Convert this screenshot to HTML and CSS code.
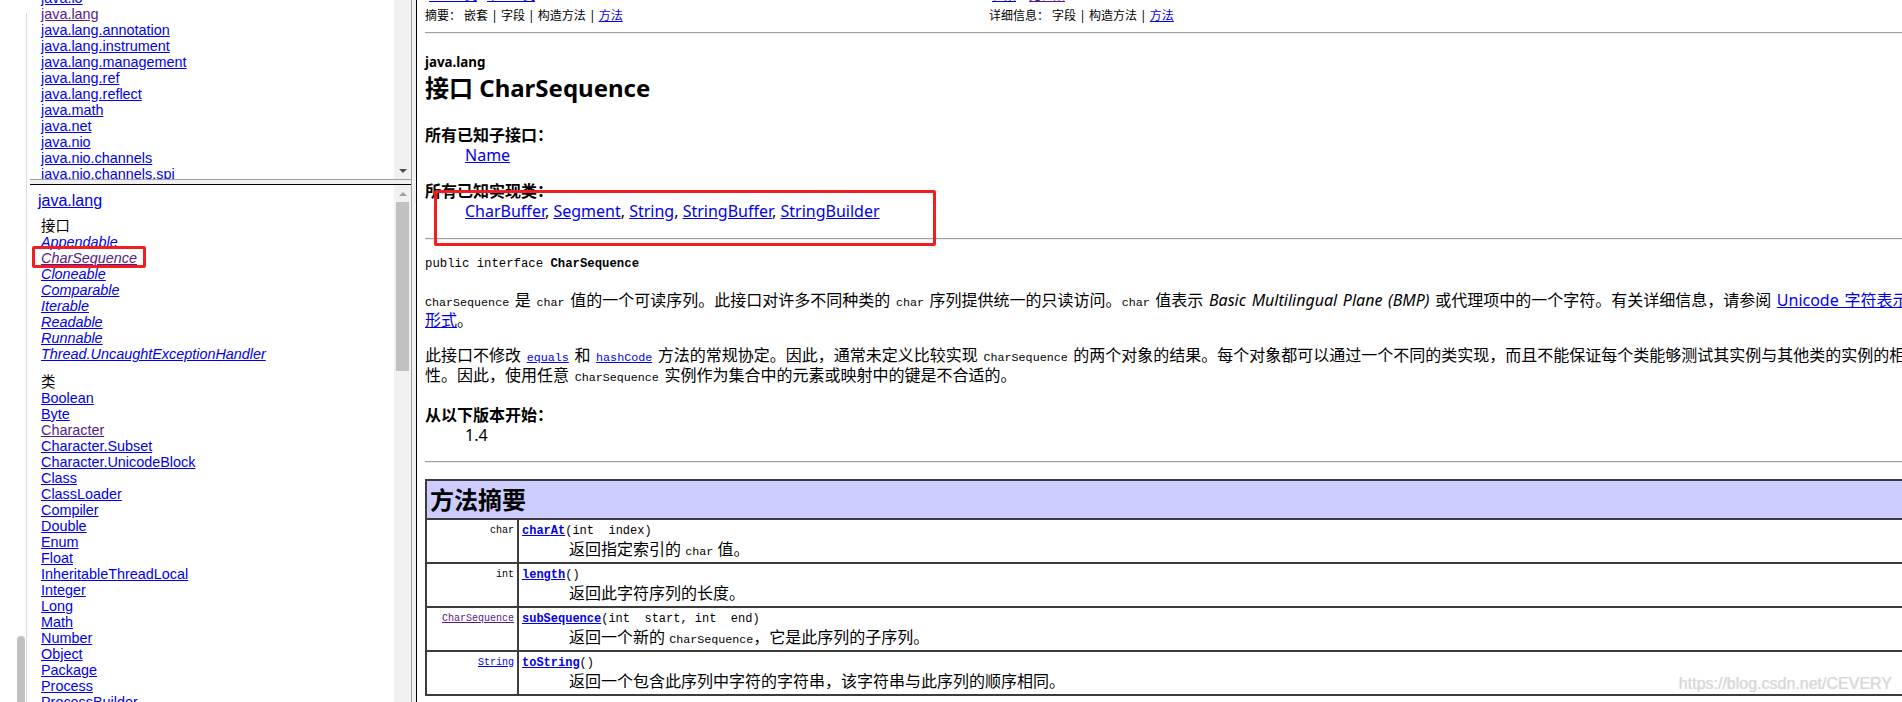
FILE: index.html
```html
<!DOCTYPE html>
<html lang="zh-CN">
<head>
<meta charset="utf-8">
<title>CharSequence (Java Platform SE 6)</title>
<link rel="stylesheet" href="styles.css">
</head>
<body>
<div class="screen">
  <aside class="edge">
    <div class="edge-col"><div class="edge-thumb"></div></div>
  </aside>

  <div class="left">
    <section class="frame frame-top">
      <div class="frame-body">
        <ul class="item-list pkg-list">
          <li><a href="#">java.io</a></li>
          <li><a href="#" class="visited">java.lang</a></li>
          <li><a href="#">java.lang.annotation</a></li>
          <li><a href="#">java.lang.instrument</a></li>
          <li><a href="#">java.lang.management</a></li>
          <li><a href="#">java.lang.ref</a></li>
          <li><a href="#">java.lang.reflect</a></li>
          <li><a href="#">java.math</a></li>
          <li><a href="#">java.net</a></li>
          <li><a href="#">java.nio</a></li>
          <li><a href="#">java.nio.channels</a></li>
          <li><a href="#">java.nio.channels.spi</a></li>
        </ul>
      </div>
      <div class="scrollbar">
        <div class="sb-space"></div>
        <div class="sb-btn down"></div>
      </div>
    </section>
    <div class="hsplit"></div>
    <section class="frame frame-bottom">
      <div class="frame-body">
        <div class="frame-title"><a href="#">java.lang</a></div>
        <div class="group">
          <div class="group-title">接口</div>
          <ul class="item-list iface">
            <li><a href="#">Appendable</a></li>
            <li class="marked"><a href="#" class="visited">CharSequence</a><span class="redbox redbox-left"></span></li>
            <li><a href="#">Cloneable</a></li>
            <li><a href="#">Comparable</a></li>
            <li><a href="#">Iterable</a></li>
            <li><a href="#">Readable</a></li>
            <li><a href="#">Runnable</a></li>
            <li><a href="#">Thread.UncaughtExceptionHandler</a></li>
          </ul>
        </div>
        <div class="group group-classes">
          <div class="group-title">类</div>
          <ul class="item-list">
            <li><a href="#">Boolean</a></li>
            <li><a href="#">Byte</a></li>
            <li><a href="#" class="visited">Character</a></li>
            <li><a href="#">Character.Subset</a></li>
            <li><a href="#">Character.UnicodeBlock</a></li>
            <li><a href="#">Class</a></li>
            <li><a href="#">ClassLoader</a></li>
            <li><a href="#">Compiler</a></li>
            <li><a href="#">Double</a></li>
            <li><a href="#">Enum</a></li>
            <li><a href="#">Float</a></li>
            <li><a href="#">InheritableThreadLocal</a></li>
            <li><a href="#">Integer</a></li>
            <li><a href="#">Long</a></li>
            <li><a href="#">Math</a></li>
            <li><a href="#">Number</a></li>
            <li><a href="#">Object</a></li>
            <li><a href="#">Package</a></li>
            <li><a href="#">Process</a></li>
            <li><a href="#">ProcessBuilder</a></li>
          </ul>
        </div>
      </div>
      <div class="scrollbar">
        <div class="sb-btn up"></div>
        <div class="sb-thumb"></div>
        <div class="sb-space"></div>
      </div>
    </section>
  </div>

  <div class="vsplit"></div>

  <main class="doc">
    <div class="navbar">
      <div class="nav-cell"><a href="#" class="nav-first">上一个类</a><a href="#" class="nav-next">下一个类</a></div>
      <div class="nav-cell"><a href="#" class="nav-frames">框架</a><a href="#" class="visited nav-noframes">无框架</a></div>
      <div class="nav-cell">摘要：&nbsp;嵌套&nbsp;|&nbsp;字段&nbsp;|&nbsp;构造方法&nbsp;|&nbsp;<a href="#">方法</a></div>
      <div class="nav-cell">详细信息：&nbsp;字段&nbsp;|&nbsp;构造方法&nbsp;|&nbsp;<a href="#">方法</a></div>
    </div>
    <hr class="rule rule-top">

    <div class="pkg-name">java.lang</div>
    <h1 class="title">接口 CharSequence</h1>

    <dl class="info info-first">
      <dt>所有已知子接口：</dt>
      <dd><a href="#">Name</a></dd>
    </dl>
    <dl class="info info-impl">
      <dt>所有已知实现类：</dt>
      <dd><a href="#">CharBuffer</a>, <a href="#">Segment</a>, <a href="#">String</a>, <a href="#">StringBuffer</a>, <a href="#">StringBuilder</a></dd>
      <span class="redbox redbox-right"></span>
    </dl>
    <hr class="rule rule-mid">

    <pre class="decl">public interface <b>CharSequence</b></pre>

    <p class="para"><code>CharSequence</code> 是 <code>char</code> 值的一个可读序列。此接口对许多不同种类的 <code>char</code> 序列提供统一的只读访问。<code>char</code> 值表示 <i>Basic Multilingual Plane (BMP)</i> 或代理项中的一个字符。有关详细信息，请参阅 <a href="#">Unicode 字符表示<br>形式</a>。</p>

    <p class="para para-second">此接口不修改 <a href="#"><code>equals</code></a> 和 <a href="#"><code>hashCode</code></a> 方法的常规协定。因此，通常未定义比较实现 <code>CharSequence</code> 的两个对象的结果。每个对象都可以通过一个不同的类实现，而且不能保证每个类能够测试其实例与其他类的实例的相等<br>性。因此，使用任意 <code>CharSequence</code> 实例作为集合中的元素或映射中的键是不合适的。</p>

    <dl class="info info-since">
      <dt>从以下版本开始：</dt>
      <dd>1.4</dd>
    </dl>
    <hr class="rule rule-low">

    <table class="summary">
      <tr class="head"><th colspan="2">方法摘要</th></tr>
      <tr>
        <td class="type">&nbsp;char</td>
        <td class="member"><div class="sig"><b><a href="#">charAt</a></b>(int&nbsp;&nbsp;index)</div><div class="desc">返回指定索引的 <code>char</code> 值。</div></td>
      </tr>
      <tr>
        <td class="type">&nbsp;int</td>
        <td class="member"><div class="sig"><b><a href="#">length</a></b>()</div><div class="desc">返回此字符序列的长度。</div></td>
      </tr>
      <tr>
        <td class="type">&nbsp;<a href="#" class="visited">CharSequence</a></td>
        <td class="member"><div class="sig"><b><a href="#">subSequence</a></b>(int&nbsp;&nbsp;start, int&nbsp;&nbsp;end)</div><div class="desc">返回一个新的 <code>CharSequence</code>，它是此序列的子序列。</div></td>
      </tr>
      <tr>
        <td class="type">&nbsp;<a href="#">String</a></td>
        <td class="member"><div class="sig"><b><a href="#">toString</a></b>()</div><div class="desc">返回一个包含此序列中字符的字符串，该字符串与此序列的顺序相同。</div></td>
      </tr>
    </table>

    <div class="watermark">https://blog.csdn.net/CEVERY</div>
  </main>
</div>
</body>
</html>
```

FILE: styles.css
```css
* { box-sizing: border-box; }
html, body { margin: 0; padding: 0; }
body {
  width: 1902px;
  height: 702px;
  overflow: hidden;
  background: #fff;
  color: #000;
  font-family: "Noto Sans", "Noto Sans CJK SC", sans-serif;
}
a { color: #0000ee; text-decoration: underline; }
a.visited { color: #551a8b; }

.screen { display: flex; height: 702px; }

/* leftmost strip of the neighbouring pane */
.edge { flex: none; width: 27px; padding-top: 13px; display: flex; flex-direction: column; }
.edge-col { flex: 1; border-right: 1px solid #dadada; display: flex; flex-direction: column; justify-content: flex-end; }
.edge-thumb { width: 8px; height: 66px; margin-left: 17px; background: #c1c1c1; border-radius: 4px 4px 0 0; }

/* left frames */
.left { flex: none; width: 382px; margin-left: 3px; display: flex; flex-direction: column; border-right: 1px solid #a0a0a0; }
.frame { display: flex; overflow: hidden; }
.frame-top { flex: none; height: 180px; border-bottom: 1px solid #a0a0a0; }
.hsplit { flex: none; height: 4px; background: #f0f0f0; }
.frame-bottom { flex: 1; border-top: 1px solid #000; }
.frame-body { flex: 1; min-width: 0; overflow: hidden; font-family: "Liberation Sans", "Noto Sans CJK SC", sans-serif; }

.scrollbar { flex: none; width: 17px; background: #f1f1f1; display: flex; flex-direction: column; }
.sb-space { flex: 1; }
.sb-btn { flex: none; height: 17px; display: flex; align-items: center; justify-content: center; }
.sb-btn::before { content: ""; width: 0; height: 0; border-left: 4px solid transparent; border-right: 4px solid transparent; }
.sb-btn.down::before { border-top: 4px solid #505050; }
.sb-btn.up::before { border-bottom: 4px solid #a3a3a3; }
.sb-thumb { flex: none; height: 169px; margin: 0 2px; background: #c1c1c1; }

.item-list { list-style: none; margin: 0; padding: 0; font-size: 14.4px; line-height: 16px; white-space: nowrap; }
.pkg-list { margin-top: -10px; padding-left: 11px; }

.frame-bottom .frame-body { padding: 7px 0 0 8px; }
.frame-title { font-size: 16px; line-height: 18px; }
.group { margin-top: 8px; padding-left: 3px; }
.group-classes { margin-top: 12px; }
.group-title { font-size: 14.4px; line-height: 16px; }
.iface a { font-style: italic; }
.marked { position: relative; }

.redbox { position: absolute; border: 3px solid #f01e1e; border-radius: 2px; pointer-events: none; }
.redbox-left { left: -9px; top: -4px; width: 114px; height: 22px; }
.redbox-right { left: 9px; top: 9px; width: 502px; height: 56px; }

.vsplit { flex: none; width: 4px; background: #f0f0f0; }

/* right document frame */
.doc {
  flex: 1;
  min-width: 0;
  position: relative;
  overflow: hidden;
  border-left: 1px solid #000;
  padding-left: 8px;
  font-size: 16px;
  line-height: 20px;
}
.navbar { margin-top: -14px; display: grid; grid-template-columns: 564px auto; font-size: 12px; line-height: 20px; white-space: nowrap; }
.nav-first { margin-left: 4px; }
.nav-next { margin-left: 10px; }
.nav-frames { margin-left: 3px; }
.nav-noframes { margin-left: 13px; }

.rule { height: 2px; border: 0; border-top: 1px solid #9d9d9d; border-bottom: 1px solid #eeeeee; margin: 0; }
.rule-top { margin-top: 6px; }
.rule-mid { margin-top: 17px; }
.rule-low { margin-top: 16px; }

.pkg-name { margin-top: 20px; font-size: 13.33px; line-height: 16px; font-weight: bold; }
.title { margin: 4px 0 0; font-size: 24px; line-height: 28px; font-weight: bold; }

.info { margin: 0; position: relative; }
.info dt { font-weight: bold; }
.info dd { margin-left: 40px; }
.info-first { margin-top: 23px; }
.info-impl { margin-top: 16px; }
.info-since { margin-top: 20px; }

.decl { margin: 16px 0 0; font-family: "Liberation Mono", monospace; font-size: 12.3px; line-height: 16px; }

.para { margin: 18px 0 0; white-space: nowrap; word-spacing: 1.5px; }
.para-second { margin-top: 15px; }
code { font-family: "Liberation Mono", "Noto Sans CJK SC", monospace; font-size: 11.7px; line-height: 1; }

.summary { margin-top: 16px; width: 1600px; border-collapse: separate; border-spacing: 0; border: 1px solid #3c3c3c; }
.summary th, .summary td { border: 1px solid #3c3c3c; padding: 3px; vertical-align: top; }
.summary th { background: #ccccff; text-align: left; font-size: 24px; line-height: 31px; font-weight: bold; }
.summary td.type { width: 92px; text-align: right; font-family: "Liberation Mono", monospace; font-size: 10px; line-height: 16px; white-space: nowrap; }
.sig { font-family: "Liberation Mono", monospace; font-size: 12px; line-height: 16px; white-space: nowrap; }
.desc { padding-left: 47px; line-height: 20px; white-space: nowrap; }

.watermark {
  position: absolute;
  right: 10px;
  bottom: 9px;
  font-family: "Liberation Sans", sans-serif;
  font-size: 16px;
  line-height: 18px;
  color: #d8d8d8;
  text-shadow: 0 0 1px rgba(0, 0, 0, 0.15);
  pointer-events: none;
}
```
